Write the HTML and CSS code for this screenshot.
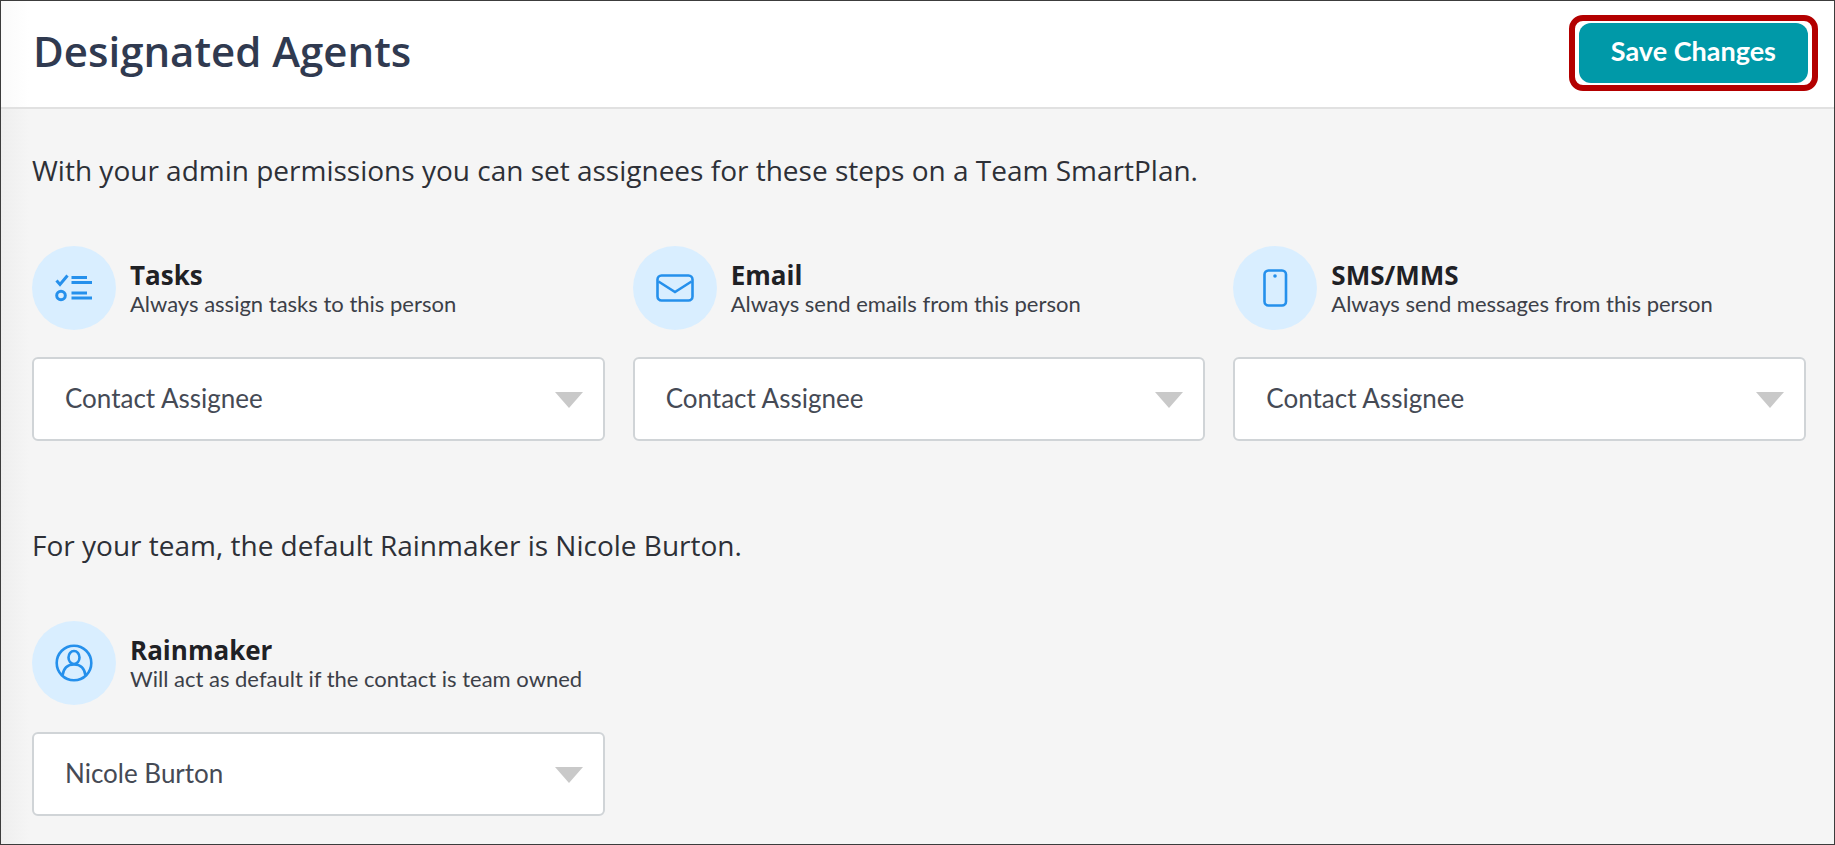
FILE: index.html
```html
<!doctype html>
<html lang="en">
<head>
    <meta charset="UTF-8">
    <meta name="viewport" content="width=device-width, initial-scale=1.0">
    <title>Designated Agents</title>
    <link rel="stylesheet" href="styles.css">
</head>
<body>
<form class="page">
    <header class="header">
        <h1 class="title">Designated Agents</h1>
        <div class="save-box">
            <button type="submit" class="save">Save Changes</button>
        </div>
    </header>
    <main class="content">
        <section class="section">
            <p class="intro">With your admin permissions you can set assignees for these steps on a Team SmartPlan.</p>
            <div class="agents">
                <div class="agent">
                    <label class="agent-label" for="tasks">
                        <span class="icon">
                            <svg viewBox="0 0 40 40" width="40" height="40">
                                <path d="M2.500 12.500l3.500 4L13.500 7.500" stroke-width="3"/>
                                <circle cx="7" cy="27.500" r="4.300" stroke-width="3"/>
                                <path d="M17.500 9.500H33M17.500 14.500H38M17.500 25H33M17.500 30H38" stroke-width="3"/>
                            </svg>
                        </span>
                        <span class="agent-text">
                            <span class="agent-name">Tasks</span>
                            <span class="agent-desc">Always assign tasks to this person</span>
                        </span>
                    </label>
                    <div class="select-box">
                        <select id="tasks" class="select">
                            <option>Contact Assignee</option>
                        </select>
                    </div>
                </div>
                <div class="agent">
                    <label class="agent-label" for="email">
                        <span class="icon">
                            <svg viewBox="0 0 40 40" width="40" height="40">
                                <rect x="2.500" y="7.500" width="35" height="25" rx="4"/>
                                <path d="M3.500 13.500L20 24L36.500 13.500"/>
                            </svg>
                        </span>
                        <span class="agent-text">
                            <span class="agent-name">Email</span>
                            <span class="agent-desc">Always send emails from this person</span>
                        </span>
                    </label>
                    <div class="select-box">
                        <select id="email" class="select">
                            <option>Contact Assignee</option>
                        </select>
                    </div>
                </div>
                <div class="agent">
                    <label class="agent-label" for="sms">
                        <span class="icon">
                            <svg viewBox="0 0 40 40" width="40" height="40">
                                <rect x="9.500" y="2.500" width="21.500" height="35" rx="4"/>
                                <circle cx="20" cy="8" r="1.800" class="dot"/>
                            </svg>
                        </span>
                        <span class="agent-text">
                            <span class="agent-name">SMS/MMS</span>
                            <span class="agent-desc">Always send messages from this person</span>
                        </span>
                    </label>
                    <div class="select-box">
                        <select id="sms" class="select">
                            <option>Contact Assignee</option>
                        </select>
                    </div>
                </div>
            </div>
        </section>
        <section class="section">
            <p class="intro">For your team, the default Rainmaker is Nicole Burton.</p>
            <div class="agents">
                <div class="agent">
                    <label class="agent-label" for="rainmaker">
                        <span class="icon">
                            <svg viewBox="0 0 40 40" width="40" height="40">
                                <circle cx="20" cy="20" r="17.300"/>
                                <ellipse cx="20" cy="14.500" rx="5.500" ry="6.500"/>
                                <path d="M8.500 32.500C9.500 25 14 21.500 20 21.500S30.500 25 31.500 32.500"/>
                            </svg>
                        </span>
                        <span class="agent-text">
                            <span class="agent-name">Rainmaker</span>
                            <span class="agent-desc">Will act as default if the contact is team owned</span>
                        </span>
                    </label>
                    <div class="select-box">
                        <select id="rainmaker" class="select">
                            <option>Nicole Burton</option>
                        </select>
                    </div>
                </div>
            </div>
        </section>
    </main>
</form>
</body>
</html>
```

FILE: styles.css
```css
* {
    box-sizing: border-box;
    margin: 0;
    padding: 0;
}

body {
    font-family: Lato, "Liberation Sans", sans-serif;
    color: #2d3037;
}

.page {
    display: flex;
    flex-direction: column;
    min-height: 100vh;
    border: 1px solid #3c3c3c;
    background-color: #f5f5f5;
}

.header {
    display: flex;
    align-items: center;
    justify-content: space-between;
    padding: 14px 16px 16px 32px;
    border-bottom: 2px solid #e1e1e1;
    background: linear-gradient(to right, #fafafa, #fff 28px);
}

.title {
    padding-bottom: 4px;
    font-family: "Open Sans", sans-serif;
    font-size: 42px;
    line-height: 56px;
    font-weight: 600;
    color: #303a50;
}

.save-box {
    padding: 2px 4px;
    border: 6px solid #b30000;
    border-radius: 14px;
}

.save {
    display: block;
    height: 60px;
    padding: 0 32px 5px;
    border: none;
    border-radius: 12px;
    background-color: #0099a8;
    font-family: inherit;
    font-size: 27px;
    font-weight: bold;
    color: #fff;
    cursor: pointer;
}

.content {
    flex: 1;
    padding: 43px 28px 24px 31px;
    background: linear-gradient(to right, #eeeeee, #f5f5f5 28px);
}

.section + .section {
    margin-top: 86px;
}

.intro {
    margin-bottom: 58px;
    font-family: "Open Sans", sans-serif;
    font-size: 28px;
    line-height: 36px;
}

.agents {
    display: grid;
    grid-template-columns: repeat(3, 1fr);
    gap: 28px;
}

.agent-label {
    display: flex;
    align-items: center;
    gap: 14px;
    margin-bottom: 27px;
}

.icon {
    display: flex;
    align-items: center;
    justify-content: center;
    flex: none;
    width: 84px;
    height: 84px;
    border-radius: 50%;
    background-color: #d9eeff;
}

.icon svg {
    fill: none;
    stroke: #2590ec;
    stroke-width: 2.6;
}

.icon .dot {
    fill: #2590ec;
    stroke: none;
}

.agent-text {
    display: flex;
    flex-direction: column;
    padding-top: 2px;
}

.agent-name {
    font-family: "Open Sans", sans-serif;
    font-size: 26px;
    line-height: 30px;
    font-weight: bold;
    color: #1f2125;
}

.agent-desc {
    font-size: 22px;
    line-height: 28px;
    color: #3c4048;
}

.select-box {
    position: relative;
}

/* drop-down arrow */
.select-box::after {
    content: "";
    position: absolute;
    top: 35px;
    right: 22px;
    border: 14px solid transparent;
    border-top: 16px solid #c9c9c9;
    border-bottom: none;
    pointer-events: none;
}

.select {
    display: block;
    width: 100%;
    height: 84px;
    padding: 0 60px 2px 31px;
    border: 2px solid #d0d4d7;
    border-radius: 6px;
    appearance: none;
    background-color: #fff;
    font-family: inherit;
    font-size: 26px;
    color: #454a55;
}
```
